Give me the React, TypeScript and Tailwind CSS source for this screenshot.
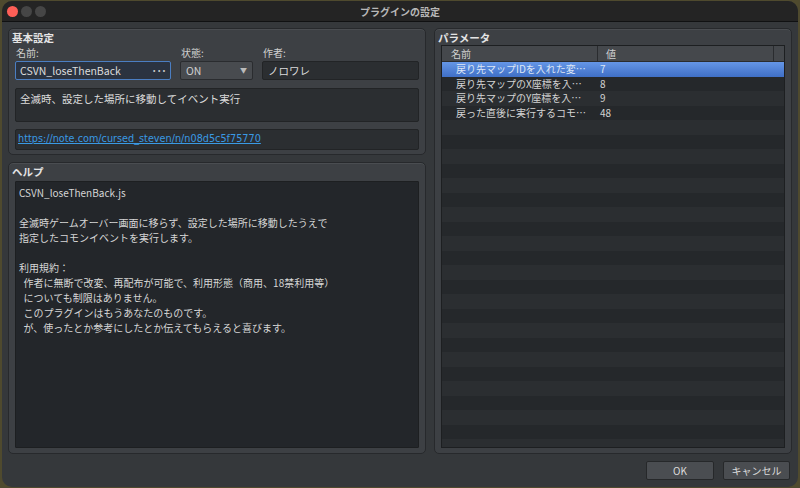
import type { ReactNode } from 'react';

const jp = { fontFamily: '"Noto Sans CJK JP", "DejaVu Sans", sans-serif' };

const helpLines = [
  'CSVN_loseThenBack.js',
  '',
  '全滅時ゲームオーバー画面に移らず、設定した場所に移動したうえで',
  '指定したコモンイベントを実行します。',
  '',
  '利用規約：',
  '  作者に無断で改変、再配布が可能で、利用形態（商用、18禁利用等）',
  '  についても制限はありません。',
  '  このプラグインはもうあなたのものです。',
  '  が、使ったとか参考にしたとか伝えてもらえると喜びます。',
];

const params = [
  { name: '戻り先マップIDを入れた変…', value: '7' },
  { name: '戻り先マップのX座標を入…', value: '8' },
  { name: '戻り先マップのY座標を入…', value: '9' },
  { name: '戻った直後に実行するコモ…', value: '48' },
];

function GroupBox({ title, className, children }: { title: string; className?: string; children: ReactNode }) {
  return (
    <section
      className={`flex flex-col rounded-[5px] border border-[#27292c] bg-[#3d4044] shadow-[inset_0_1px_0_#4a4d51] ${className ?? ''}`}
    >
      <h2 className="h-[16px] pl-[3px] pt-[2px] text-[10.5px] font-bold leading-[14px] text-[#e4e4e4]">{title}</h2>
      {children}
    </section>
  );
}

function Label({ children }: { children: ReactNode }) {
  return <p className="h-[16px] pl-[1px] text-[10px] leading-[16px] text-[#cfcfcf]">{children}</p>;
}

export default function App() {
  return (
    <div className="h-[488px] w-[800px] overflow-hidden bg-[#4f4a2e] pl-[2px] pt-[1px]" style={jp}>
      <div className="flex h-[486px] w-[796px] flex-col overflow-hidden rounded-[10px] bg-[#35383b]">
        {/* title bar */}
        <header className="relative flex h-[21px] shrink-0 items-center border-b border-[#101112] bg-[#242424] px-[5px]">
          <div className="flex gap-[3px]">
            <span className="h-[11px] w-[11px] rounded-full bg-[#fe5f57]" />
            <span className="h-[11px] w-[11px] rounded-full bg-[#464646]" />
            <span className="h-[11px] w-[11px] rounded-full bg-[#464646]" />
          </div>
          <p className="absolute inset-x-0 text-center text-[10px] font-bold text-[#b8b8b8]">プラグインの設定</p>
        </header>

        <div className="flex min-h-0 flex-1 flex-col px-[6px] pt-[6px]">
          <div className="flex h-[426px] gap-[8px]">
            {/* left column */}
            <div className="flex w-[418px] flex-col gap-[7px]">
              <GroupBox title="基本設定" className="h-[127px]">
                <div className="flex flex-col px-[6px]">
                  <div className="flex gap-[9px]">
                    <div className="w-[156px]">
                      <Label>名前:</Label>
                      <div className="flex h-[19px] items-center justify-between rounded-[2px] border border-[#4b7ec2] bg-[#2b3340] px-[4px] text-[10.5px] text-[#dcdcdc]">
                        <span>CSVN_loseThenBack</span>
                        <span className="text-[10px] font-bold tracking-[-1px] text-[#c8c8c8]">···</span>
                      </div>
                    </div>
                    <div className="w-[73px]">
                      <Label>状態:</Label>
                      <div className="flex h-[19px] items-center justify-between rounded-[2px] border border-[#2a2c2f] bg-[#484b4f] px-[5px] text-[10.5px] text-[#cfcfcf]">
                        <span>ON</span>
                        <span className="text-[7px] text-[#bbb]">▼</span>
                      </div>
                    </div>
                    <div className="w-[157px]">
                      <Label>作者:</Label>
                      <div className="flex h-[19px] items-center rounded-[2px] border border-[#222426] bg-[#2b2e31] px-[5px] text-[10.5px] text-[#dcdcdc]">
                        ノロワレ
                      </div>
                    </div>
                  </div>
                  <div className="mt-[8px] h-[34px] rounded-[2px] border border-[#222426] bg-[#2b2e31] px-[4px] pt-[2px] text-[10.5px] leading-[15px] text-[#dcdcdc]">
                    全滅時、設定した場所に移動してイベント実行
                  </div>
                  <div className="mt-[7px] flex h-[21px] items-center rounded-[2px] border border-[#222426] bg-[#2b2e31] px-[2px]">
                    <a
                      href="#"
                      className="text-[#3a9ae4] underline"
                      style={{ fontFamily: '"DejaVu Sans", sans-serif', fontSize: '9.7px' }}
                    >
                      https://note.com/cursed_steven/n/n08d5c5f75770
                    </a>
                  </div>
                </div>
              </GroupBox>

              <GroupBox title="ヘルプ" className="flex-1">
                <div className="mx-[6px] mb-[5px] mt-[2px] flex-1 rounded-[1px] border border-[#1d1f21] bg-[#23262a] px-[3px] pt-[3px]">
                  {helpLines.map((line, i) => (
                    <p key={i} className="h-[15px] whitespace-pre text-[10px] leading-[15px] text-[#d6d6d6]">
                      {line}
                    </p>
                  ))}
                </div>
              </GroupBox>
            </div>

            {/* right column */}
            <GroupBox title="パラメータ" className="flex-1">
              <div className="mx-[6px] mb-[5px] flex flex-1 flex-col overflow-hidden border border-[#1d1f21] bg-[#25282b]">
                <div className="flex h-[16px] shrink-0 border-b border-[#2a2c2f] bg-[#45484c] text-[10px] leading-[15px] text-[#d0d0d0]">
                  <div className="w-[156px] border-r border-[#2a2c2f] pl-[9px]">名前</div>
                  <div className="w-[176px] border-r border-[#2a2c2f] pl-[8px]">値</div>
                  <div className="flex-1" />
                </div>
                {Array.from({ length: 28 }).map((_, i) => {
                  const p = params[i];
                  const selected = i === 0;
                  return (
                    <div
                      key={i}
                      className={`flex h-[14.5px] shrink-0 text-[10px] leading-[14.5px] ${
                        selected
                          ? 'bg-gradient-to-b from-[#6596e6] to-[#3f6fc6] text-[#dde6f5]'
                          : i % 2 === 1
                            ? 'bg-[#25282b] text-[#d4d4d4]'
                            : 'bg-[#2b2e31] text-[#d4d4d4]'
                      }`}
                    >
                      <div className="w-[157px] overflow-hidden whitespace-nowrap pl-[14px]">{p?.name}</div>
                      <div className="pl-[1px]">{p?.value}</div>
                    </div>
                  );
                })}
              </div>
            </GroupBox>
          </div>

          {/* buttons */}
          <div className="flex justify-end gap-[9px] pr-[2px] pt-[7px]">
            <button className="h-[19px] w-[68px] rounded-[2px] border border-[#26282a] bg-[#4a4d51] text-[10px] text-[#dcdcdc]">
              OK
            </button>
            <button className="h-[19px] w-[67px] rounded-[2px] border border-[#26282a] bg-[#4a4d51] text-[10px] text-[#dcdcdc]">
              キャンセル
            </button>
          </div>
        </div>
      </div>
    </div>
  );
}
